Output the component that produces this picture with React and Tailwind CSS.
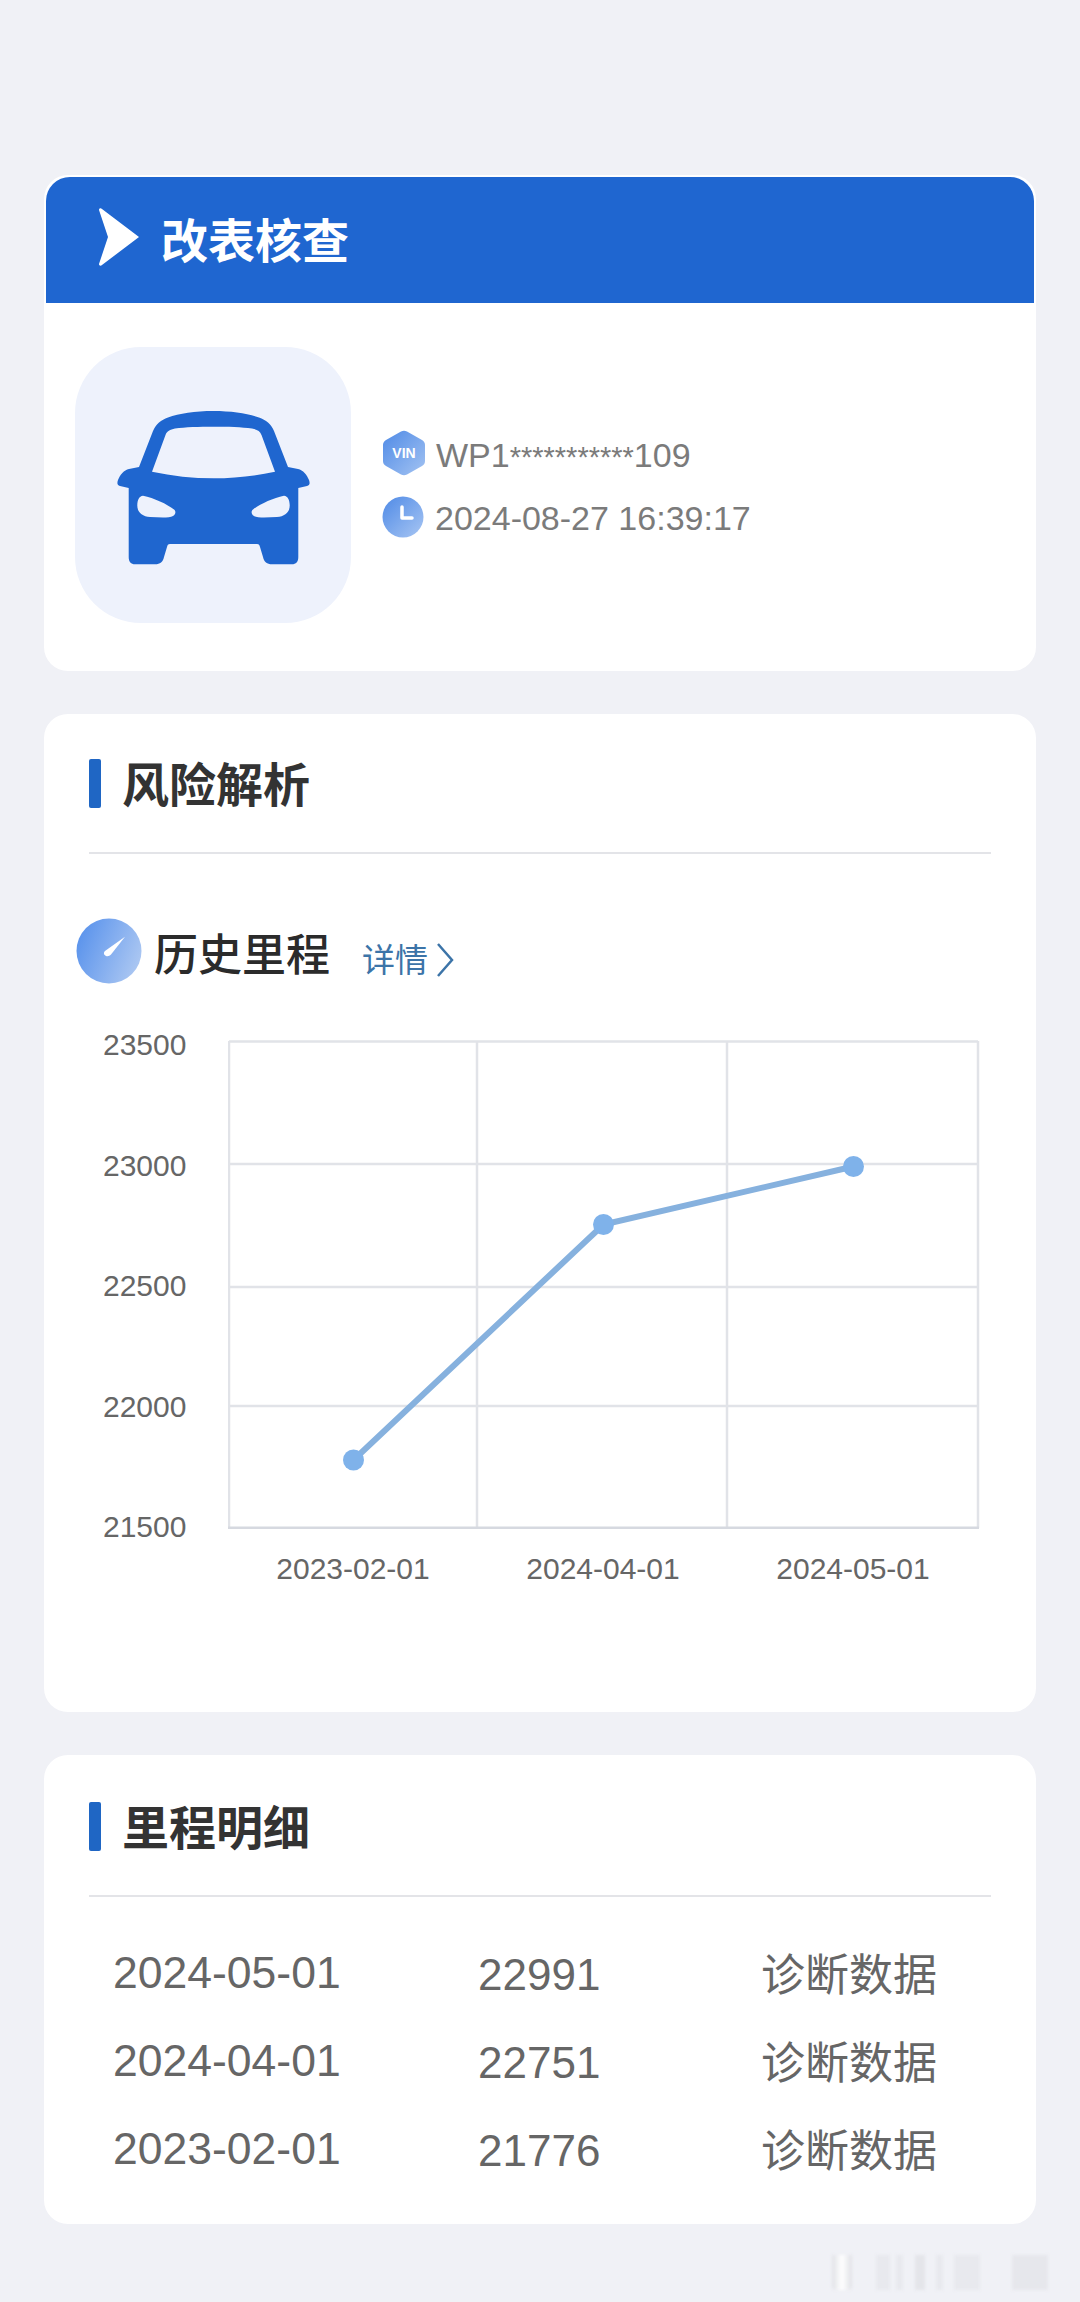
const sans = '"Liberation Sans", "Noto Sans CJK SC", sans-serif';

const rows = [
  ["2024-05-01", "22991", "诊断数据"],
  ["2024-04-01", "22751", "诊断数据"],
  ["2023-02-01", "21776", "诊断数据"],
];

function CarIcon() {
  return (
    <svg width="193" height="154" viewBox="0 0 193 154" fill="#1f66cf" className="mt-[5px]">
      <path
        fillRule="evenodd"
        d="M96.500 0C78 0 62 2.500 51 6.500C44 9 39 13 36 20L22 56L12 58C7 59 3 64 1 69C0 72 0 74 3 75L11.700 77V146C11.700 151 14 153.300 18 153.300H38C43 153.300 46 151 47 146L50 136C50.500 134 51 133 53 133H140C142 133 142.500 134 143 136L146 146C147 151 150 153.300 155 153.300H175C179 153.300 181.300 151 181.300 146V77L190 75C193 74 193 72 192 69C190 64 186 59 181 58L171 56L157 20C154 13 149 9 142 6.500C131 2.500 115 0 96.500 0ZM96.500 15.700C82 15.700 68 16 58 17.500C53 18.500 50 20 48.500 24L35 60.700C55 65 76 67.300 96.500 67.300C117 67.300 138 65 158 60.700L144.500 24C143 20 140 18.500 135 17.500C125 16 111 15.700 96.500 15.700ZM26 84.700C37 87 50 93 57 98.500C59 100 59 103 56 105C54 106.500 50 106.500 46 106.500L33 106C25 105.500 20 101 20.300 94C20.500 89 22 85 26 84.700ZM167 84.700C156 87 143 93 136 98.500C134 100 134 103 137 105C139 106.500 143 106.500 147 106.500L160 106C168 105.500 173 101 172.700 94C172.500 89 171 85 167 84.700Z"
      />
    </svg>
  );
}

function VinIcon() {
  return (
    <svg width="44" height="46" viewBox="0 0 44 46" className="shrink-0">
      <defs>
        <linearGradient id="vinFill" x1="0" y1="0" x2="1" y2="1">
          <stop offset="0" stopColor="#4f8ae6" />
          <stop offset="1" stopColor="#a3c3f2" />
        </linearGradient>
      </defs>
      <path
        d="M19 1.500c2-1 4-1 6 0l15 8.500c2 1 3 3 3 5v16c0 2-1 4-3 5l-15 8.500c-2 1-4 1-6 0L4 36c-2-1-3-3-3-5V15c0-2 1-4 3-5z"
        fill="url(#vinFill)"
      />
      <text x="22" y="28" textAnchor="middle" fontSize="14" fontWeight="700" fill="#fff" fontFamily="Liberation Sans">
        VIN
      </text>
    </svg>
  );
}

function ClockIcon() {
  return (
    <svg width="42" height="42" viewBox="0 0 42 42" className="shrink-0">
      <defs>
        <linearGradient id="clockFill" x1="0" y1="0" x2="1" y2="1">
          <stop offset="0" stopColor="#4f8ae6" />
          <stop offset="1" stopColor="#a8c6f3" />
        </linearGradient>
      </defs>
      <circle cx="21" cy="21" r="20.500" fill="url(#clockFill)" />
      <path d="M20 11v11h10" fill="none" stroke="#fff" strokeWidth="3.500" strokeLinecap="round" strokeLinejoin="round" />
    </svg>
  );
}

function GaugeIcon() {
  return (
    <svg width="66" height="66" viewBox="0 0 66 66" className="shrink-0">
      <defs>
        <linearGradient id="gaugeFill" x1="0" y1="0.3" x2="1" y2="0.7">
          <stop offset="0" stopColor="#5a93ec" />
          <stop offset="1" stopColor="#adc8f2" />
        </linearGradient>
      </defs>
      <circle cx="33" cy="33" r="32.500" fill="url(#gaugeFill)" />
      <path d="M49 18.700L29 33C27 35 28 37 30 38C32 38.500 33.500 38 35 36.500Z" fill="#fff" />
    </svg>
  );
}

function SectionTitle({ children }) {
  return (
    <div className="flex items-center gap-[21px] h-[49px]">
      <div className="w-3 h-[49px] rounded-[2px] bg-[#1f66c4]" />
      <h2 className="pt-[3px] text-[47px] leading-none font-bold text-[#333333]">{children}</h2>
    </div>
  );
}

function Chart() {
  const xs = [125.5, 375.5, 625.5];
  const ys = [420, 184.5, 126.5];
  return (
    <div className="mt-[56px] ml-[59px] mr-[56px]">
      <div className="flex">
        <div className="w-[125px] h-[487px] pt-[5px] flex flex-col justify-between text-[30px] leading-none text-[#666666]">
          {["23500", "23000", "22500", "22000", "21500"].map((v) => (
            <span key={v} className="h-0 flex items-center">
              {v}
            </span>
          ))}
        </div>
        <svg width="752" height="489" viewBox="0 0 752 489" className="block">
          <g stroke="#e1e3e8" strokeWidth="2.500" fill="none">
            <path d="M1 1.500H750M1 124H750M1 247H750M1 366H750" />
            <path d="M1 1V488M249 1V488M499 1V488M750 1V488" />
            <path d="M0 488H751" stroke="#d6d9e0" strokeWidth="3" />
          </g>
          <polyline points={xs.map((x, i) => `${x},${ys[i]}`).join(" ")} fill="none" stroke="#86b1de" strokeWidth="6" />
          {ys.map((y, i) => (
            <circle key={i} cx={xs[i]} cy={y} r="10.500" fill="#7fb2ea" />
          ))}
        </svg>
      </div>
      <div className="ml-[125px] w-[750px] mt-[25px] grid grid-cols-3 text-center text-[30px] leading-none text-[#666666]">
        <span>2023-02-01</span>
        <span>2024-04-01</span>
        <span>2024-05-01</span>
      </div>
    </div>
  );
}

// faint blurred leftovers of a watermark, bottom right corner
function WatermarkSmear() {
  return (
    <div className="absolute left-[832px] top-[2255px] flex h-[35px] blur-[1.5px]">
      <div className="w-5 h-full rounded-b-[4px] bg-gradient-to-r from-[#e0e1e6] via-white to-[#e0e1e6]" />
      <div className="ml-6 w-[14px] h-full bg-[#e8e9ee]" />
      <div className="ml-[6px] w-[7px] h-full bg-[#e8e9ee]" />
      <div className="ml-[12px] w-[10px] h-full bg-[#e4e5ea]" />
      <div className="ml-[11px] w-[7px] h-full bg-[#e8e9ee]" />
      <div className="ml-[11px] w-[26px] h-full bg-[#e8e9ee]" />
      <div className="ml-[32px] w-[36px] h-full bg-[#e6e7ec]" />
    </div>
  );
}

export default function App() {
  return (
    <div
      className="relative w-[1080px] h-[2302px] overflow-hidden bg-[#f0f1f6] px-11 pt-[175px] flex flex-col gap-[43px]"
      style={{ fontFamily: sans }}
    >
      <section className="h-[496px] bg-white rounded-[24px] overflow-hidden shrink-0 pt-[2px] px-[2px]">
        <div className="h-[126px] bg-[#1f66d0] rounded-t-[24px] flex items-center pl-[52px]">
          <svg width="42" height="58" viewBox="0 0 42 58" className="-mt-[6px]">
            <path d="M1 2c0-2 2-2 3-1l37 28L4 57c-1 1-3 1-3-1l9-27z" fill="#fff" />
          </svg>
          <h1 className="ml-[21px] pt-[3px] text-[47px] leading-none font-bold text-white">改表核查</h1>
        </div>
        <div className="flex items-center pl-[29px] pt-[44px]">
          <div className="w-[276px] h-[276px] rounded-[66px] bg-[#eef2fc] flex items-center justify-center">
            <CarIcon />
          </div>
          <div className="ml-[31px] flex flex-col gap-[18px] text-[34px] leading-none text-[#7b7b7b]">
            <div className="flex items-center gap-[10px] h-[46px]">
              <VinIcon />
              <span className="pt-[3px]">
                WP1<span className="text-[29px]">***********</span>109
              </span>
            </div>
            <div className="flex items-center gap-[11px] h-[46px]">
              <ClockIcon />
              <span className="pt-[2px]">2024-08-27 16:39:17</span>
            </div>
          </div>
        </div>
      </section>

      <section className="h-[998px] bg-white rounded-[24px] shrink-0 pt-[45px] px-[45px]">
        <SectionTitle>风险解析</SectionTitle>
        <div className="mt-[44px] h-[2px] bg-[#e3e4e8]" />
        <div className="mt-[64px] -ml-[13px] flex items-center">
          <GaugeIcon />
          <h3 className="ml-[12px] pt-[10px] text-[44px] leading-none font-medium text-[#2b2b2b]">历史里程</h3>
          <span className="ml-[32px] pt-[18px] text-[33px] leading-none text-[#3c74a8]">详情</span>
          <svg width="20" height="36" viewBox="0 0 20 36" className="ml-[7px] mt-[18px]">
            <path d="M3 2l14 16L3 34" fill="none" stroke="#3c74a8" strokeWidth="2.500" />
          </svg>
        </div>
        <div className="-mx-[45px]">
          <Chart />
        </div>
      </section>

      <section className="h-[469px] bg-white rounded-[24px] shrink-0 pt-[47px] px-[45px]">
        <SectionTitle>里程明细</SectionTitle>
        <div className="mt-[44px] h-[2px] bg-[#e3e4e8]" />
        <div className="mt-[56px] pl-[24px] text-[#666666] flex flex-col gap-[44px]">
          {rows.map((r) => (
            <div key={r[0]} className="flex items-center h-[44px] text-[44px] leading-none">
              <span className="w-[365px] pb-[3px] text-[44.500px]">{r[0]}</span>
              <span className="w-[283px]">{r[1]}</span>
              <span className="pt-[1px]">{r[2]}</span>
            </div>
          ))}
        </div>
      </section>

      <WatermarkSmear />
    </div>
  );
}
